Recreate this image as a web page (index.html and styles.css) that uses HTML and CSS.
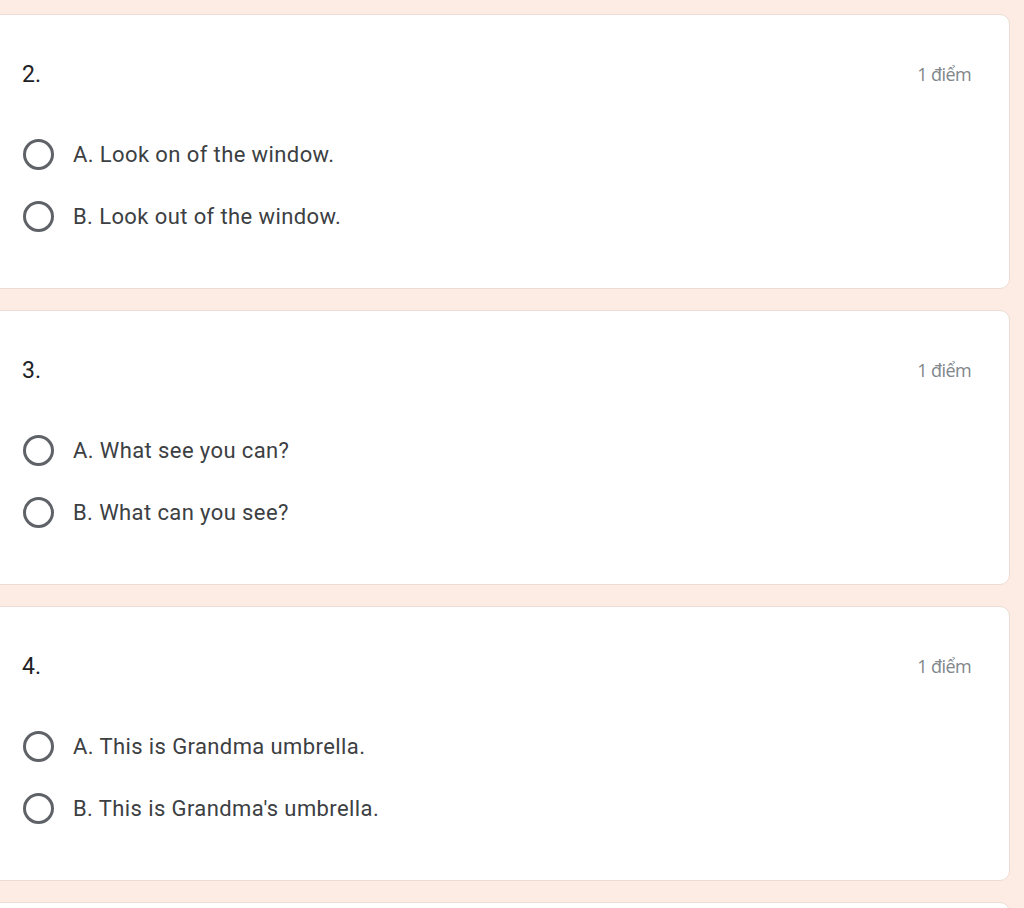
FILE: index.html
```html
<!DOCTYPE html>
<html lang="vi">
<head>
    <meta charset="UTF-8">
    <meta name="viewport" content="width=device-width, initial-scale=1.0">
    <title>Bài kiểm tra</title>
    <link rel="stylesheet" href="styles.css">
</head>
<body>
    <div class="form-list">
        <div class="question-card">
            <div class="question-head">
                <span class="question-number">2.</span>
                <span class="points">1 điểm</span>
            </div>
            <label class="option"><span class="radio"></span><span>A. Look on of the window.</span></label>
            <label class="option"><span class="radio"></span><span>B. Look out of the window.</span></label>
        </div>

        <div class="question-card">
            <div class="question-head">
                <span class="question-number">3.</span>
                <span class="points">1 điểm</span>
            </div>
            <label class="option"><span class="radio"></span><span>A. What see you can?</span></label>
            <label class="option"><span class="radio"></span><span>B. What can you see?</span></label>
        </div>

        <div class="question-card">
            <div class="question-head">
                <span class="question-number">4.</span>
                <span class="points">1 điểm</span>
            </div>
            <label class="option"><span class="radio"></span><span>A. This is Grandma umbrella.</span></label>
            <label class="option"><span class="radio"></span><span>B. This is Grandma's umbrella.</span></label>
        </div>

        <div class="question-card"></div>
    </div>
</body>
</html>
```

FILE: styles.css
```css
body {
    margin: 0;
    padding: 0;
    background-color: #fcece4;
    font-family: Roboto, "Noto Sans", sans-serif;
    overflow: hidden;
}

.form-list {
    display: flex;
    flex-direction: column;
    gap: 21px;
    margin-left: -12px;
    margin-right: 14px;
    padding-top: 14px;
}

.question-card {
    background: white;
    border: 1px solid #ecdcd4;
    border-radius: 10px;
    height: 275px;
    box-sizing: border-box;
    padding: 42px 38px 0 33px;
}

.question-head {
    display: flex;
    justify-content: space-between;
    align-items: center;
    height: 34px;
    margin-bottom: 32px;
}

.question-number {
    font-size: 23px;
    color: #202124;
}

.points {
    font-size: 18px;
    color: #80868b;
    font-family: "Open Sans", sans-serif;
    letter-spacing: -0.6px;
}

.option {
    display: flex;
    align-items: center;
    height: 62px;
    font-size: 22px;
    color: #3c4043;
    letter-spacing: 0.4px;
}

.radio {
    width: 25px;
    height: 25px;
    border: 3px solid #5f6368;
    border-radius: 50%;
    margin-left: 1px;
    margin-right: 19px;
    flex-shrink: 0;
}
```
